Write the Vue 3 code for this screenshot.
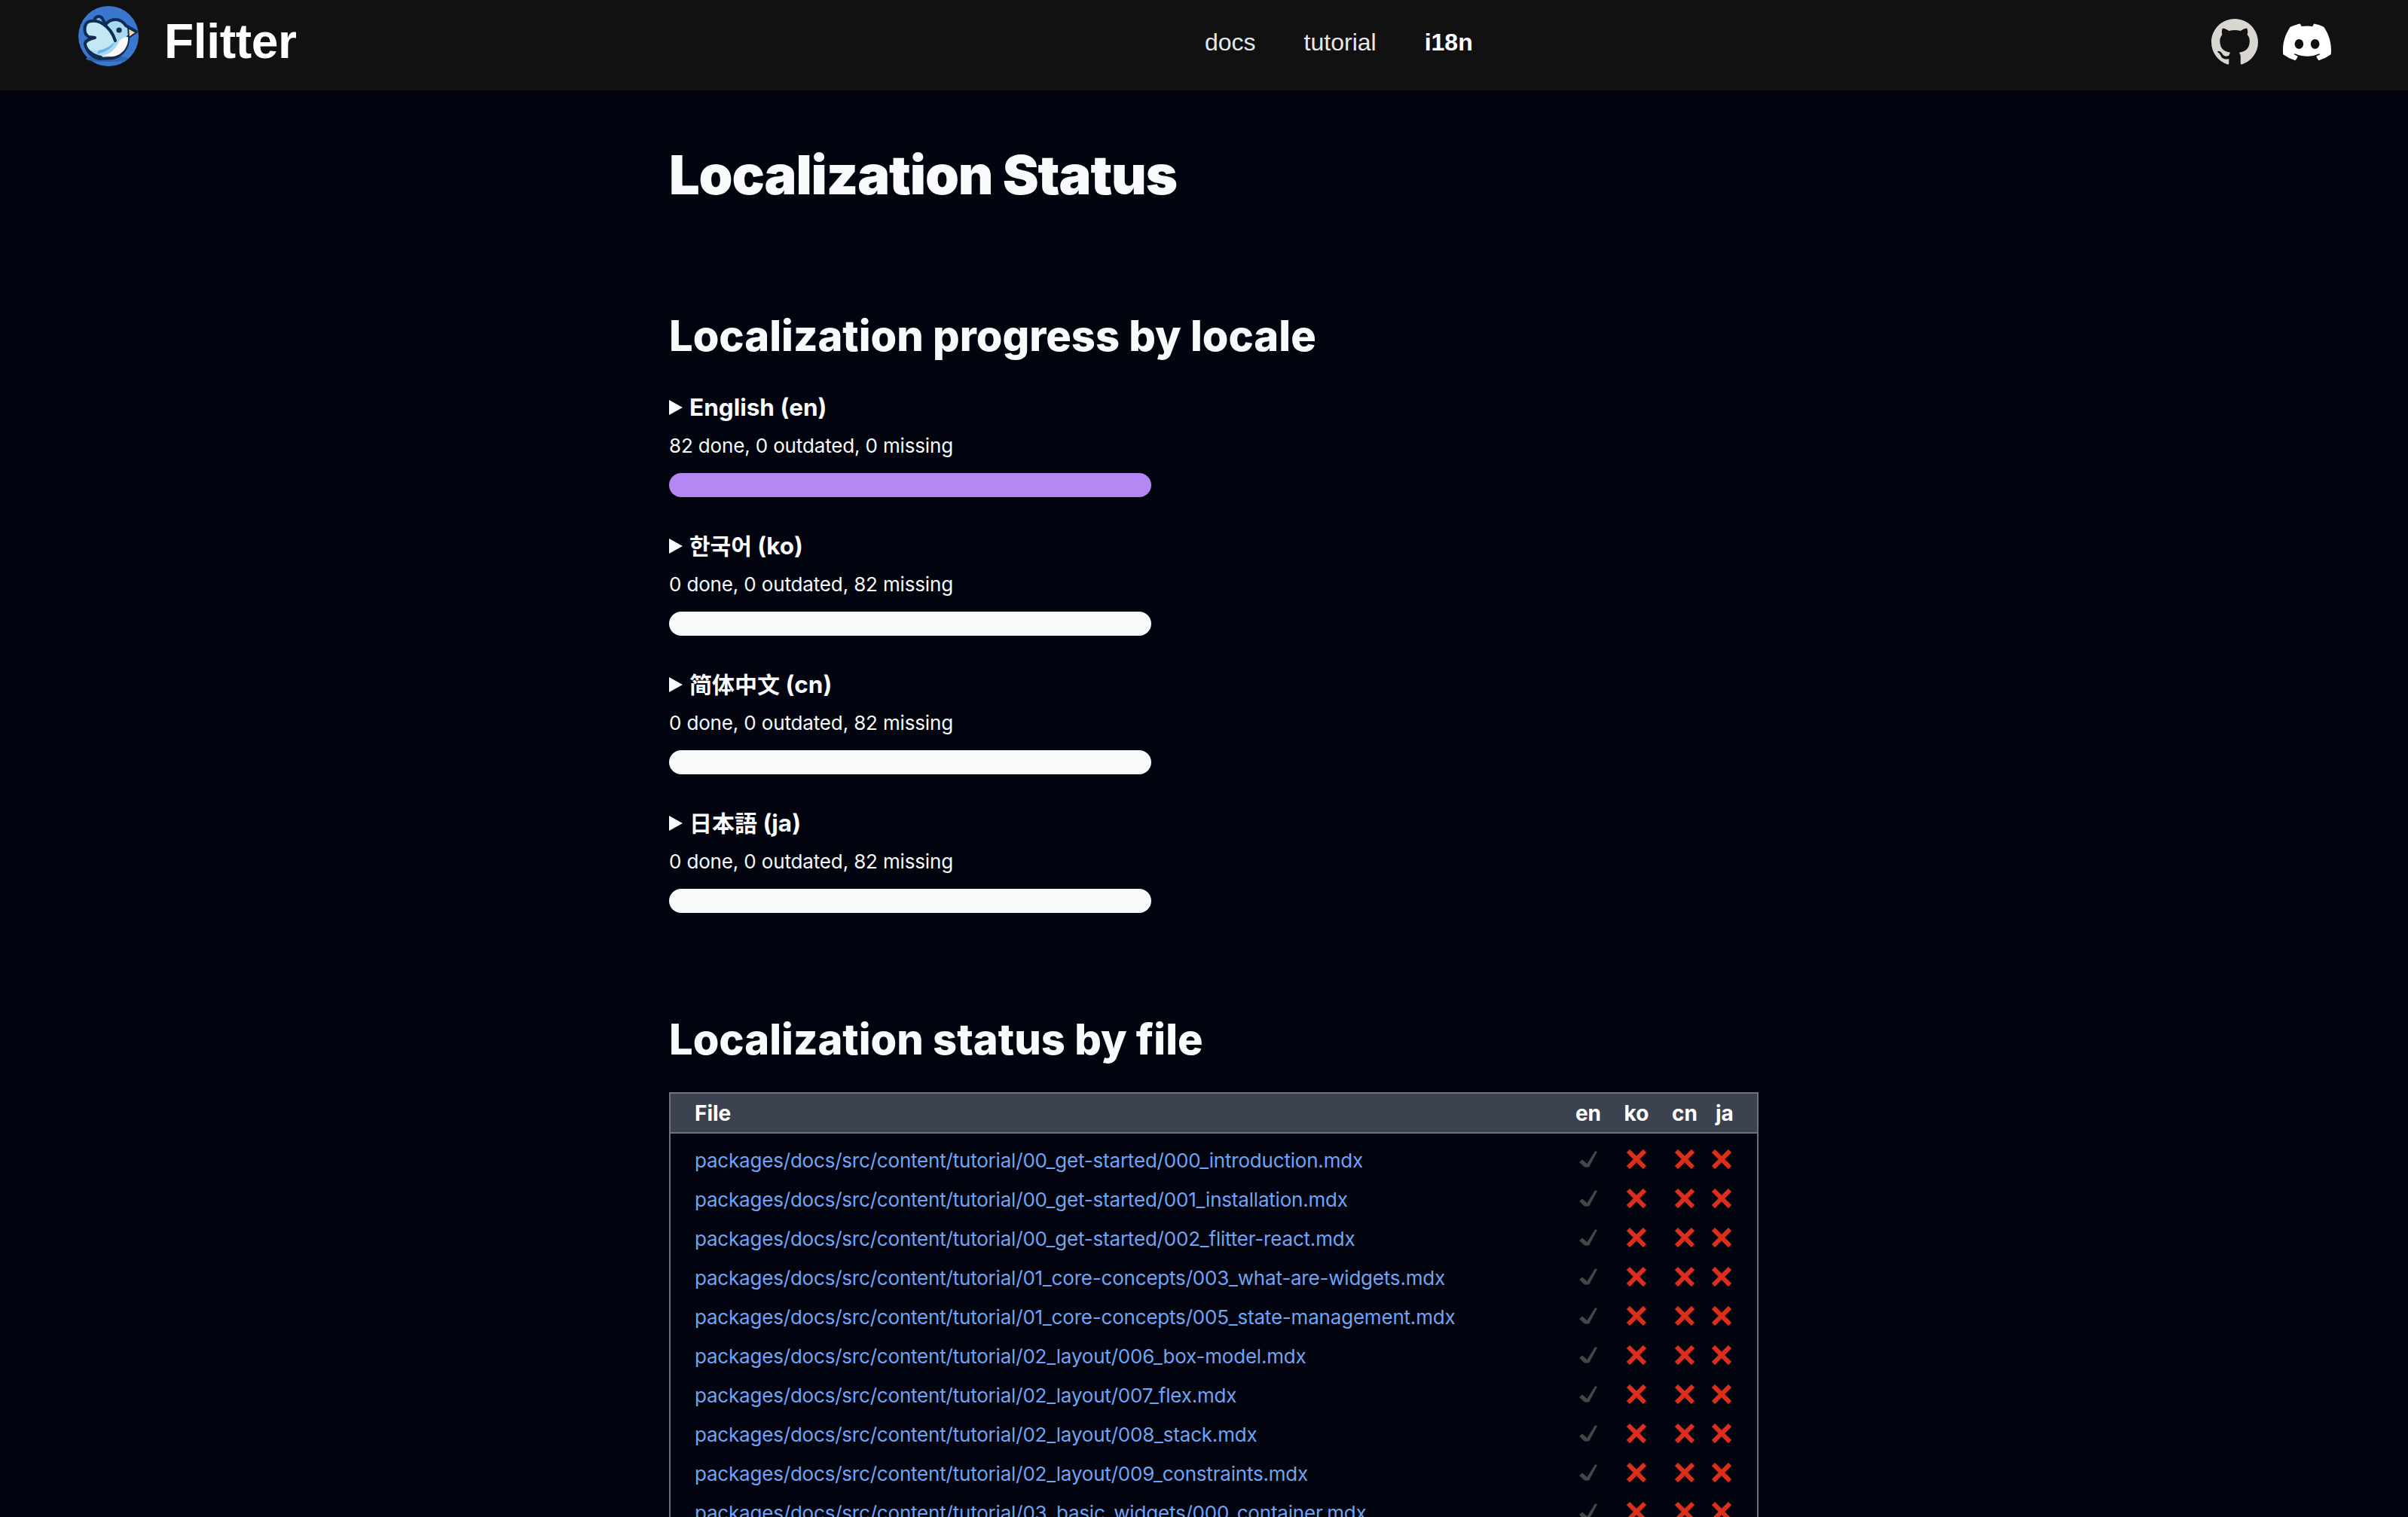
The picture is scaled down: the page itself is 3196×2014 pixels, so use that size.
<script setup>
const locales = [
  { native: 'English', code: '(en)', lang: 'en', stat: '82 done, 0 outdated, 0 missing', done: true },
  { native: '한국어', code: '(ko)', lang: 'ko', stat: '0 done, 0 outdated, 82 missing', done: false },
  { native: '简体中文', code: '(cn)', lang: 'zh', stat: '0 done, 0 outdated, 82 missing', done: false },
  { native: '日本語', code: '(ja)', lang: 'ja', stat: '0 done, 0 outdated, 82 missing', done: false }
]
const base = 'packages/docs/src/content/tutorial/'
const files = [
  '00_get-started/000_introduction.mdx',
  '00_get-started/001_installation.mdx',
  '00_get-started/002_flitter-react.mdx',
  '01_core-concepts/003_what-are-widgets.mdx',
  '01_core-concepts/005_state-management.mdx',
  '02_layout/006_box-model.mdx',
  '02_layout/007_flex.mdx',
  '02_layout/008_stack.mdx',
  '02_layout/009_constraints.mdx',
  '03_basic_widgets/000_container.mdx'
].map((f) => base + f)
const cols = ['ko', 'cn', 'ja']
</script>

<template>
  <div class="page">
    <header class="nav">
      <a class="brand">
        <svg class="logo" viewBox="0 0 80 80" width="80" height="80">
          <circle cx="40" cy="40" r="40" fill="#3a78d0" />
          <ellipse cx="38" cy="70" rx="28" ry="4" fill="#2f63ad" />
          <path d="M21 20 C22 13 29 12 32 17 L38 27 L27 30 Z" fill="#6cb2e8" stroke="#102c55" stroke-width="4" stroke-linejoin="round" />
          <path d="M36 25 C42 16 56 15 63 26 L77 34 L66 41 C67 52 60 66 46 69 L30 70 C20 69 12 62 11 54 Z" fill="#a9d8f1" stroke="#102c55" stroke-width="4" stroke-linejoin="round" />
          <path d="M25 64 C38 60 46 56 48 46 L44 38 L30 50 Z" fill="#6cb2e8" />
          <path d="M28 66 C40 66 50 58 54 47 C57 42 63 41 66 41 C67 52 60 65 46 67 Z" fill="#fbf8f5" />
          <path d="M66 29 L77 35 L67 42 Z" fill="#f8d89c" stroke="#102c55" stroke-width="2" stroke-linejoin="round" />
          <path d="M9 25 C11 19 20 17 27 20 C36 23 44 34 49 45 C44 54 34 58 25 59 C16 60 8 56 8 50 C9 46 14 44 21 42 L13 41 C8 38 7 31 9 25 Z" fill="#c3e8f5" />
          <path d="M49 46 C46 37 41 29 33 24 C26 19 14 18 10 24 C7 30 8 38 14 41 L22 42 C14 44 8 46 9 51 C10 58 18 66 30 68" fill="none" stroke="#102c55" stroke-width="4" stroke-linecap="round" stroke-linejoin="round" />
          <circle cx="54" cy="32" r="3.6" fill="#102c55" />
        </svg>
        <span class="brand-name">Flitter</span>
      </a>
      <nav class="links">
        <a>docs</a>
        <a>tutorial</a>
        <a class="active">i18n</a>
      </nav>
      <div class="icons">
        <svg class="gh" viewBox="0 0 16 16" width="62" height="62">
          <path fill="#d9d6d2" d="M8 0C3.58 0 0 3.58 0 8c0 3.54 2.29 6.53 5.47 7.59.4.07.55-.17.55-.38 0-.19-.01-.82-.01-1.49-2.01.37-2.53-.49-2.69-.94-.09-.23-.48-.94-.82-1.13-.28-.15-.68-.52-.01-.53.63-.01 1.08.58 1.23.82.72 1.21 1.87.87 2.33.66.07-.52.28-.87.51-1.07-1.78-.2-3.64-.89-3.64-3.95 0-.87.31-1.59.82-2.15-.08-.2-.36-1.02.08-2.12 0 0 .67-.21 2.2.82.64-.18 1.32-.27 2-.27.68 0 1.36.09 2 .27 1.53-1.04 2.2-.82 2.2-.82.44 1.1.16 1.92.08 2.12.51.56.82 1.27.82 2.15 0 3.07-1.87 3.75-3.65 3.95.29.25.54.73.54 1.48 0 1.07-.01 1.93-.01 2.2 0 .21.15.46.55.38A8.013 8.013 0 0016 8c0-4.42-3.58-8-8-8z" />
        </svg>
        <svg class="dc" viewBox="0 0 16 16" width="64" height="64">
          <path fill="#fff" d="M13.545 2.907a13.227 13.227 0 0 0-3.257-1.011.05.05 0 0 0-.052.025c-.141.25-.297.577-.406.833a12.19 12.19 0 0 0-3.658 0 8.258 8.258 0 0 0-.412-.833.051.051 0 0 0-.052-.025c-1.125.194-2.22.534-3.257 1.011a.041.041 0 0 0-.021.018C.356 6.024-.213 9.047.066 12.032c.001.014.01.028.021.037a13.276 13.276 0 0 0 3.995 2.02.05.05 0 0 0 .056-.019c.308-.42.582-.863.818-1.329a.05.05 0 0 0-.01-.059.051.051 0 0 0-.018-.011 8.875 8.875 0 0 1-1.248-.595.05.05 0 0 1-.02-.066.051.051 0 0 1 .015-.019c.084-.063.168-.129.248-.195a.05.05 0 0 1 .051-.007c2.619 1.196 5.454 1.196 8.041 0a.052.052 0 0 1 .053.007c.08.066.164.132.248.195a.051.051 0 0 1-.004.085 8.254 8.254 0 0 1-1.249.594.05.05 0 0 0-.03.03.052.052 0 0 0 .003.041c.24.465.515.909.817 1.329a.05.05 0 0 0 .056.019 13.235 13.235 0 0 0 4.001-2.02.049.049 0 0 0 .021-.037c.334-3.451-.559-6.449-2.366-9.106a.034.034 0 0 0-.02-.019Zm-8.198 7.307c-.789 0-1.438-.724-1.438-1.612 0-.889.637-1.613 1.438-1.613.807 0 1.45.73 1.438 1.613 0 .888-.637 1.612-1.438 1.612Zm5.316 0c-.788 0-1.438-.724-1.438-1.612 0-.889.637-1.613 1.438-1.613.807 0 1.451.73 1.438 1.613 0 .888-.631 1.612-1.438 1.612Z" />
        </svg>
      </div>
    </header>

    <main class="content">
      <h1>Localization Status</h1>

      <h2 class="h-progress">Localization progress by locale</h2>
      <section class="locales">
        <div v-for="l in locales" :key="l.lang" class="locale">
          <details>
            <summary :lang="l.lang"><span><span class="native">{{ l.native }}</span> {{ l.code }}</span></summary>
          </details>
          <p class="stat">{{ l.stat }}</p>
          <div class="bar" :class="{ done: l.done }"></div>
        </div>
      </section>

      <h2 class="h-file">Localization status by file</h2>
      <div class="table">
        <div class="row head">
          <span class="file">File</span>
          <span class="col">en</span>
          <span v-for="c in cols" :key="c" class="col" :class="c">{{ c }}</span>
        </div>
        <div class="rows">
          <div v-for="f in files" :key="f" class="row">
            <a class="file link">{{ f }}</a>
            <span class="col">
              <svg viewBox="0 0 24 22" width="24" height="22"><path fill="#454545" d="M0 15 4 11.5 10.5 17 21 .3 24 1 13 21.5H7Z" /></svg>
            </span>
            <span v-for="c in cols" :key="c" class="col" :class="c">
              <svg viewBox="0 0 26 26" width="26" height="26"><path d="M2 2 24 24M24 2 2 24" stroke="#dd2e1c" stroke-width="6" fill="none" /></svg>
            </span>
          </div>
        </div>
      </div>
    </main>
  </div>
</template>

<style>
html, body { background: #02040f; }
</style>

<style scoped>
.page {
  height: 2014px;
  overflow: hidden;
  background: #02040f;
  color: #fff;
  font-family: Inter, "Noto Sans CJK KR", sans-serif;
}
.nav {
  height: 120px;
  background: #111;
  display: flex;
  align-items: flex-start;
  padding: 0 102px 0 104px;
  box-sizing: border-box;
}
.brand { width: 1495px; flex: none; display: flex; align-items: flex-start; padding-top: 8px; box-sizing: border-box; }
.brand-name {
  margin-left: 34px;
  font-family: "Liberation Sans", sans-serif;
  font-weight: 700;
  font-size: 64px;
  letter-spacing: -0.3px;
  line-height: 94px;
}
.logo { flex: none; }
.links {
  display: flex;
  gap: 64px;
  font-family: "Liberation Sans", sans-serif;
  font-size: 32px;
  line-height: 112px;
  color: #e5e7eb;
}
.links .active { font-weight: 700; color: #fff; }
.icons { margin-left: auto; display: flex; align-items: center; gap: 33px; padding-top: 24px; }
.gh, .dc { display: block; flex: none; }

.content { padding-left: 888px; width: 1446px; }
h1 { margin: 0; font-size: 72px; line-height: 80px; font-weight: 900; padding-top: 72px; letter-spacing: -1.1px; color: #f9fafb; }
h2 { margin: 0; font-size: 56px; line-height: 68px; font-weight: 800; color: #f9fafb; }
.h-progress { margin-top: 140px; }
.h-file { margin-top: 134px; }
.locales { margin-top: 34px; }
.locale + .locale { margin-top: 38px; }
summary {
  display: flex;
  align-items: center;
  gap: 9px;
  list-style: none;
  font-size: 31.5px;
  line-height: 54px;
  font-weight: 700;
  height: 54px;
  color: #f9fafb;
}
summary::before {
  content: "";
  flex: none;
  width: 18px;
  height: 20px;
  background: #f9fafb;
  clip-path: polygon(0 0, 100% 50%, 0 100%);
}
summary:lang(ko) .native,
summary:lang(zh) .native,
summary:lang(ja) .native { font-size: 30px; }
summary:lang(zh) { font-family: Inter, "Noto Sans CJK SC", sans-serif; }
summary:lang(ja) { font-family: Inter, "Noto Sans CJK JP", sans-serif; }
.stat { margin: 2px 0 0; font-size: 26px; letter-spacing: -0.15px; line-height: 44px; color: #f9fafb; }
.bar { margin-top: 14px; width: 640px; height: 32px; border-radius: 16px; background: #f9fafb; }
.bar.done { background: #b587f3; }

.table {
  margin-top: 36px;
  width: 1446px;
  box-sizing: border-box;
  border: 2px solid #6b7280;
}
.row { display: flex; align-items: center; height: 52px; padding-left: 32px; font-size: 26px; letter-spacing: -0.2px; }
.head {
  box-sizing: border-box;
  height: 53px;
  font-size: 28px;
  letter-spacing: 0;
  background: #3d4250;
  border-bottom: 2px solid #6b7280;
  font-weight: 700;
}
.rows { padding-top: 8px; }
.file { width: 1154px; flex: none; white-space: nowrap; }
.link { color: #70a4f5; padding-top: 2px; }
.col { width: 64px; flex: none; display: flex; justify-content: center; }
.col.ja { justify-content: flex-start; }
.row .ja { padding-left: 4px; }
.head .ja { padding-left: 9px; }
.col svg { display: block; }
</style>
